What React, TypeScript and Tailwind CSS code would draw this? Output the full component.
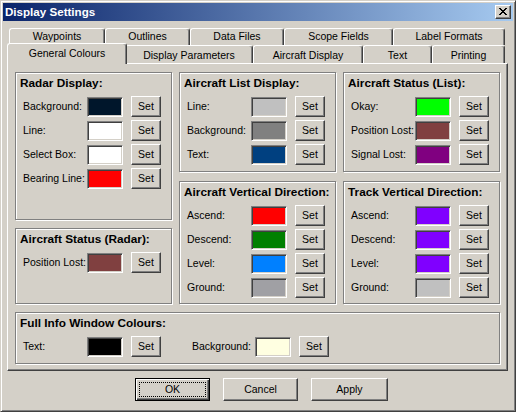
import React from "react";

type Row = { label: string; color: string };

const Swatch = ({ color }: { color: string }) => (
  <div
    className={`w-[36px] h-[20px] border border-t-[#808080] border-l-[#808080] border-b-white border-r-white shadow-[inset_1px_1px_0_#404040,inset_-1px_-1px_0_#d4d0c8] ${color}`}
  />
);

const SetButton = () => (
  <button className="ml-[8px] w-[30px] h-[21px] bg-[#d4d0c8] border border-t-white border-l-white border-r-[#404040] border-b-[#404040] shadow-[inset_-1px_-1px_0_#808080] text-[10.5px] leading-none text-black flex items-center justify-center">
    Set
  </button>
);

const ColourRow = ({ label, color }: Row) => (
  <div className="flex items-center h-[21px] pl-[7px]">
    <span className="w-[64px] whitespace-nowrap text-[10.5px] leading-none">{label}</span>
    <Swatch color={color} />
    <SetButton />
  </div>
);

const Group = ({ title, rows, className }: { title: string; rows: Row[]; className: string }) => (
  <div className={`border border-[#808080] shadow-[inset_1px_1px_0_#fff,1px_1px_0_#fff] ${className}`}>
    <div className="mt-[3px] ml-[4px] h-[14px] leading-[14px] font-bold text-[11.8px] whitespace-nowrap">{title}</div>
    <div className="mt-[6px] flex flex-col gap-[3px]">
      {rows.map((r) => (
        <ColourRow key={r.label} label={r.label} color={r.color} />
      ))}
    </div>
  </div>
);

const backTabs = [
  { label: "Waypoints", w: "w-[96px]" },
  { label: "Outlines", w: "w-[85px]" },
  { label: "Data Files", w: "w-[94px]" },
  { label: "Scope Fields", w: "w-[109px]" },
  { label: "Label Formats", w: "w-[112px]" },
];

const frontTabs = [
  { label: "Display Parameters", w: "w-[128px]" },
  { label: "Aircraft Display", w: "w-[110px]" },
  { label: "Text", w: "w-[69px]" },
  { label: "Printing", w: "w-[73px]" },
];

const tabBase =
  "flex justify-center border-t border-l border-r border-t-white border-l-white border-r-[#404040] rounded-t-[3px] shadow-[inset_-1px_0_0_#808080] text-[10.5px] whitespace-nowrap bg-[#d4d0c8]";

export default function App() {
  return (
    <div className="w-[516px] h-[412px] bg-[#d4d0c8] border border-t-[#d4d0c8] border-l-[#d4d0c8] border-r-[#404040] border-b-[#404040] shadow-[inset_1px_1px_0_#fff,inset_-1px_-1px_0_#808080] p-[2px] flex flex-col overflow-hidden text-black font-['Liberation_Sans',Arial,sans-serif]">
      {/* Title bar */}
      <div className="h-[18px] shrink-0 flex items-center justify-between pl-[2px] pr-[2px] bg-[linear-gradient(to_right,#0a246a,#a6caf0)]">
        <span className="text-white font-bold text-[11.6px] leading-none">Display Settings</span>
        <div className="w-[16px] h-[14px] bg-[#d4d0c8] border border-t-white border-l-white border-r-[#404040] border-b-[#404040] shadow-[inset_-1px_-1px_0_#808080] flex items-center justify-center">
          <svg width="8" height="7" viewBox="0 0 8 7" shapeRendering="crispEdges" className="-mt-px">
            <path
              fill="#000"
              d="M0 0h2v1H0z M6 0h2v1H6z M1 1h2v1H1z M5 1h2v1H5z M2 2h4v1H2z M3 3h2v1H3z M2 4h4v1H2z M1 5h2v1H1z M5 5h2v1H5z M0 6h2v1H0z M6 6h2v1H6z"
            />
          </svg>
        </div>
      </div>

      {/* Tabs */}
      <div className="mt-[7px] pl-[6px] shrink-0">
        <div className="flex h-[17px]">
          {backTabs.map((t) => (
            <div key={t.label} className={`${tabBase} ${t.w} h-[17px] items-center`}>
              {t.label}
            </div>
          ))}
        </div>
        <div className="flex h-[18px]">
          <div className={`${tabBase} relative z-10 w-[120px] h-[21px] -mt-[2px] -ml-[2px] -mr-[2px] items-center`}>
            General Colours
          </div>
          {frontTabs.map((t) => (
            <div key={t.label} className={`${tabBase} ${t.w} h-[18px] items-center pt-[2px]`}>
              {t.label}
            </div>
          ))}
        </div>
      </div>

      {/* Panel */}
      <div className="ml-[4px] w-[501px] h-[308px] shrink-0 border border-t-white border-l-white border-r-[#404040] border-b-[#404040] shadow-[inset_-1px_-1px_0_#808080] pt-[8px] pl-[7px]">
        <div className="flex gap-[7px]">
          <div className="w-[157px] flex flex-col gap-[8px]">
            <Group
              title="Radar Display:"
              className="h-[148px]"
              rows={[
                { label: "Background:", color: "bg-[#00162b]" },
                { label: "Line:", color: "bg-white" },
                { label: "Select Box:", color: "bg-white" },
                { label: "Bearing Line:", color: "bg-[#ff0000]" },
              ]}
            />
            <Group
              title="Aircraft Status (Radar):"
              className="h-[76px]"
              rows={[{ label: "Position Lost:", color: "bg-[#804040]" }]}
            />
          </div>
          <div className="w-[157px] flex flex-col gap-[9px]">
            <Group
              title="Aircraft List Display:"
              className="h-[100px]"
              rows={[
                { label: "Line:", color: "bg-[#c0c0c0]" },
                { label: "Background:", color: "bg-[#808080]" },
                { label: "Text:", color: "bg-[#004080]" },
              ]}
            />
            <Group
              title="Aircraft Vertical Direction:"
              className="h-[123px]"
              rows={[
                { label: "Ascend:", color: "bg-[#ff0000]" },
                { label: "Descend:", color: "bg-[#008000]" },
                { label: "Level:", color: "bg-[#0080ff]" },
                { label: "Ground:", color: "bg-[#a0a0a4]" },
              ]}
            />
          </div>
          <div className="w-[157px] flex flex-col gap-[9px]">
            <Group
              title="Aircraft Status (List):"
              className="h-[100px]"
              rows={[
                { label: "Okay:", color: "bg-[#00ff00]" },
                { label: "Position Lost:", color: "bg-[#804040]" },
                { label: "Signal Lost:", color: "bg-[#800080]" },
              ]}
            />
            <Group
              title="Track Vertical Direction:"
              className="h-[123px]"
              rows={[
                { label: "Ascend:", color: "bg-[#8000ff]" },
                { label: "Descend:", color: "bg-[#8000ff]" },
                { label: "Level:", color: "bg-[#8000ff]" },
                { label: "Ground:", color: "bg-[#c0c0c0]" },
              ]}
            />
          </div>
        </div>

        <div className="mt-[8px] w-[485px] h-[52px] border border-[#808080] shadow-[inset_1px_1px_0_#fff,1px_1px_0_#fff]">
          <div className="mt-[3px] ml-[4px] h-[14px] leading-[14px] font-bold text-[11.8px]">Full Info Window Colours:</div>
          <div className="mt-[6px] flex items-center h-[21px] pl-[7px]">
            <span className="w-[64px] text-[10.5px] leading-none">Text:</span>
            <Swatch color="bg-black" />
            <SetButton />
            <span className="ml-[31px] w-[63px] whitespace-nowrap text-[10.5px] leading-none">Background:</span>
            <Swatch color="bg-[#ffffe1]" />
            <SetButton />
          </div>
        </div>
      </div>

      {/* Buttons */}
      <div className="mt-[7px] pl-[132px] flex gap-[13px] shrink-0">
        <button className="w-[75px] h-[23px] bg-[#d4d0c8] border border-black shadow-[inset_1px_1px_0_#fff,inset_-1px_-1px_0_#404040,inset_-2px_-2px_0_#808080] text-[10.5px] leading-none flex items-center justify-center outline-1 outline-dotted outline-black -outline-offset-5">
          OK
        </button>
        <button className="w-[75px] h-[23px] bg-[#d4d0c8] border border-t-white border-l-white border-r-[#404040] border-b-[#404040] shadow-[inset_-1px_-1px_0_#808080] text-[10.5px] leading-none flex items-center justify-center">
          Cancel
        </button>
        <button className="w-[77px] h-[23px] bg-[#d4d0c8] border border-t-white border-l-white border-r-[#404040] border-b-[#404040] shadow-[inset_-1px_-1px_0_#808080] text-[10.5px] leading-none flex items-center justify-center">
          Apply
        </button>
      </div>
    </div>
  );
}
